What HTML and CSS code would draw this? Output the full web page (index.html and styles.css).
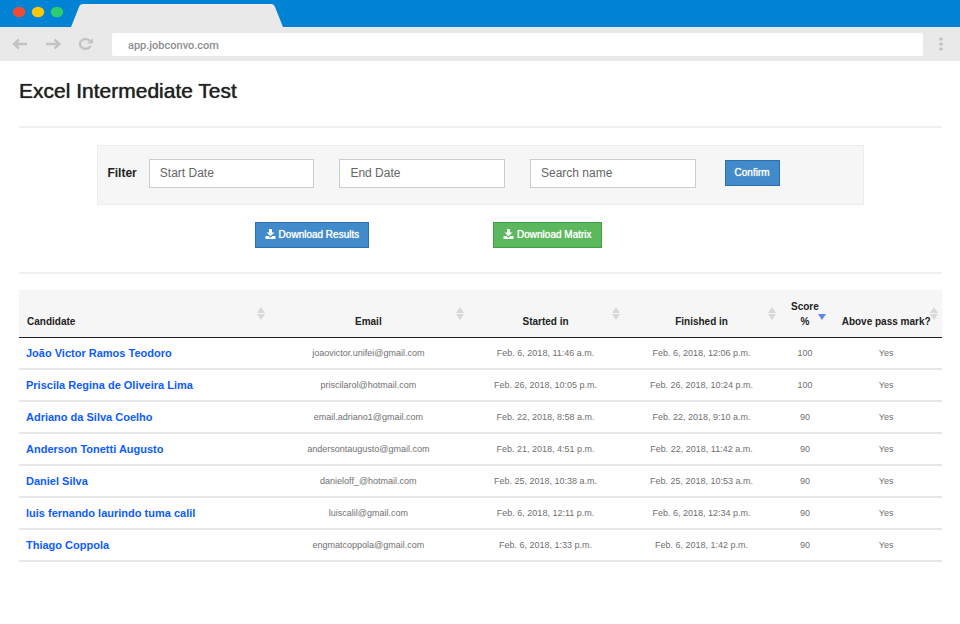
FILE: index.html
```html
<!DOCTYPE html>
<html lang="en">
<head>
    <meta charset="UTF-8">
    <meta name="viewport" content="width=device-width, initial-scale=1.0">
    <title>Excel Intermediate Test</title>
    <link rel="stylesheet" href="styles.css">
</head>
<body>
    <header class="browser">
        <div class="tabs">
            <svg class="lights" width="52" height="12" viewBox="0 0 52 12">
                <ellipse cx="7" cy="6" rx="6.3" ry="5.2" fill="#f24a33"/>
                <ellipse cx="26" cy="6" rx="6.3" ry="5.2" fill="#f7c80a"/>
                <ellipse cx="45" cy="6" rx="6.3" ry="5.2" fill="#2dcc70"/>
            </svg>
            <svg class="tab" width="212" height="23" viewBox="0 0 212 23">
                <path d="M0 23 L8 3 Q9 0 12 0 H200 Q203 0 204 3 L212 23 Z" fill="#e9e9e9"/>
            </svg>
        </div>
        <div class="toolbar">
            <button class="nav" aria-label="Back">
                <svg width="16" height="12" viewBox="0 0 16 12"><path d="M7 1.5 L2 6 L7 10.5 M2 6 H15"/></svg>
            </button>
            <button class="nav" aria-label="Forward">
                <svg width="16" height="12" viewBox="0 0 16 12"><path d="M9.5 1.5 L14.5 6 L9.5 10.5 M14.5 6 H1"/></svg>
            </button>
            <button class="nav" aria-label="Reload">
                <svg width="16" height="12" viewBox="0 0 16 12"><path d="M12.6 8 A5.6 4.8 0 1 1 11.8 2.8"/><path class="solid" d="M15 0.3 V5.6 H8.8 Z"/></svg>
            </button>
            <input class="address" type="text" value="app.jobconvo.com" aria-label="Address">
            <button class="nav menu" aria-label="Menu">
                <svg width="6" height="14" viewBox="0 0 6 14"><ellipse class="solid" cx="3" cy="2" rx="2" ry="1.6"/><ellipse class="solid" cx="3" cy="7" rx="2" ry="1.6"/><ellipse class="solid" cx="3" cy="12" rx="2" ry="1.6"/></svg>
            </button>
        </div>
    </header>

    <main class="page">
        <h1>Excel Intermediate Test</h1>
        <hr>

        <form class="filter">
            <label for="start">Filter</label>
            <input type="text" id="start" placeholder="Start Date">
            <input type="text" id="end" placeholder="End Date" aria-label="End Date">
            <input type="text" id="name" placeholder="Search name" aria-label="Search name">
            <button type="button" class="btn">Confirm</button>
        </form>

        <div class="downloads">
            <button class="btn">
                <svg width="11" height="10" viewBox="0 0 11 10"><path d="M4 0 H7 V3.5 H9.5 L5.5 7.2 L1.5 3.5 H4 Z M0.5 7 H3.4 L5.5 8.8 L7.6 7 H10.5 V10 H0.5 Z"/></svg>
                Download Results
            </button>
            <button class="btn green">
                <svg width="11" height="10" viewBox="0 0 11 10"><path d="M4 0 H7 V3.5 H9.5 L5.5 7.2 L1.5 3.5 H4 Z M0.5 7 H3.4 L5.5 8.8 L7.6 7 H10.5 V10 H0.5 Z"/></svg>
                Download Matrix
            </button>
        </div>
        <hr>

        <table class="results">
            <colgroup>
                <col class="col-candidate">
                <col class="col-email">
                <col class="col-date">
                <col class="col-date">
                <col class="col-score">
                <col class="col-pass">
            </colgroup>
            <thead>
                <tr>
                    <th class="sort">Candidate</th>
                    <th class="sort">Email</th>
                    <th class="sort">Started in</th>
                    <th class="sort">Finished in</th>
                    <th class="sort desc">Score %</th>
                    <th class="sort">Above pass mark?</th>
                </tr>
            </thead>
            <tbody>
                <tr>
                    <td><a href="#">João Victor Ramos Teodoro</a></td>
                    <td>joaovictor.unifei@gmail.com</td>
                    <td>Feb. 6, 2018, 11:46 a.m.</td>
                    <td>Feb. 6, 2018, 12:06 p.m.</td>
                    <td>100</td>
                    <td>Yes</td>
                </tr>
                <tr>
                    <td><a href="#">Priscila Regina de Oliveira Lima</a></td>
                    <td>priscilarol@hotmail.com</td>
                    <td>Feb. 26, 2018, 10:05 p.m.</td>
                    <td>Feb. 26, 2018, 10:24 p.m.</td>
                    <td>100</td>
                    <td>Yes</td>
                </tr>
                <tr>
                    <td><a href="#">Adriano da Silva Coelho</a></td>
                    <td>email.adriano1@gmail.com</td>
                    <td>Feb. 22, 2018, 8:58 a.m.</td>
                    <td>Feb. 22, 2018, 9:10 a.m.</td>
                    <td>90</td>
                    <td>Yes</td>
                </tr>
                <tr>
                    <td><a href="#">Anderson Tonetti Augusto</a></td>
                    <td>andersontaugusto@gmail.com</td>
                    <td>Feb. 21, 2018, 4:51 p.m.</td>
                    <td>Feb. 22, 2018, 11:42 a.m.</td>
                    <td>90</td>
                    <td>Yes</td>
                </tr>
                <tr>
                    <td><a href="#">Daniel Silva</a></td>
                    <td>danieloff_@hotmail.com</td>
                    <td>Feb. 25, 2018, 10:38 a.m.</td>
                    <td>Feb. 25, 2018, 10:53 a.m.</td>
                    <td>90</td>
                    <td>Yes</td>
                </tr>
                <tr>
                    <td><a href="#">luis fernando laurindo tuma calil</a></td>
                    <td>luiscalil@gmail.com</td>
                    <td>Feb. 6, 2018, 12:11 p.m.</td>
                    <td>Feb. 6, 2018, 12:34 p.m.</td>
                    <td>90</td>
                    <td>Yes</td>
                </tr>
                <tr>
                    <td><a href="#">Thiago Coppola</a></td>
                    <td>engmatcoppola@gmail.com</td>
                    <td>Feb. 6, 2018, 1:33 p.m.</td>
                    <td>Feb. 6, 2018, 1:42 p.m.</td>
                    <td>90</td>
                    <td>Yes</td>
                </tr>
            </tbody>
        </table>
    </main>
</body>
</html>
```

FILE: styles.css
```css
* {
    box-sizing: border-box;
}
body {
    margin: 0;
    background-color: #fff;
    color: #222;
    font-family: "Liberation Sans", Arial, sans-serif;
    font-size: 12px;
}
button, input {
    font-family: inherit;
}

/* browser bar */
.tabs {
    display: flex;
    align-items: flex-end;
    gap: 7px;
    height: 27px;
    padding-left: 12px;
    background-color: #0082d5;
}
.lights {
    margin-bottom: 9px;
}
.toolbar {
    display: flex;
    align-items: center;
    gap: 17px;
    height: 34px;
    padding: 0 16px 0 12px;
    background-color: #e9e9e9;
}
.nav {
    display: flex;
    padding: 0;
    border: 0;
    background: none;
}
.nav svg {
    fill: none;
    stroke: #c3c3c3;
    stroke-width: 2.4;
}
.nav .solid {
    fill: #c3c3c3;
    stroke: none;
}
.address {
    flex: 1;
    height: 23px;
    margin: 0 -2px 0 1px;
    padding: 3px 16px 0;
    border: 0;
    border-radius: 2px;
    background-color: #fff;
    color: #8c8c8c;
    font-family: Roboto, "Liberation Sans", sans-serif;
    font-size: 11px;
    font-weight: 500;
}

/* page */
.page {
    padding: 18px 18px 18px 19px;
}
h1 {
    margin: 0 0 23px;
    font-size: 21px;
    font-weight: 400;
    line-height: 24px;
    text-shadow: 0 0 1px #222;
}
hr {
    height: 2px;
    margin: 0;
    border: 0;
    background-color: #f0f0f0;
}
.filter {
    display: flex;
    align-items: center;
    gap: 25px;
    width: 83%;
    height: 60px;
    margin: 17px auto;
    padding: 0 83px 4px 9px;
    border: 1px solid #ececec;
    background-color: #f6f6f6;
}
.filter label {
    margin-right: -13px;
    font-weight: bold;
}
.filter input {
    flex: 1;
    min-width: 0;
    height: 29px;
    padding: 0 10px;
    border: 1px solid #ccc;
    background-color: #fff;
    font-size: 12px;
}
.filter input::placeholder {
    color: #666;
}
.filter .btn {
    margin-left: 4px;
}
.btn {
    height: 26px;
    padding: 0 9px 1px;
    border: 1px solid #2b6fb0;
    background-color: #428bca;
    color: #fff;
    font-size: 10px;
    text-shadow: 0 0 1px #fff;
    white-space: nowrap;
}
.btn svg {
    fill: #fff;
    vertical-align: -1px;
}
.green {
    border-color: #3f9f45;
    background-color: #5cb85c;
}
.downloads {
    display: grid;
    grid-template-columns: 1fr 1fr;
    justify-items: center;
    width: 51%;
    margin: 0 0 24px 19%;
}

/* results */
.results {
    width: 100%;
    margin-top: 16px;
    border-collapse: collapse;
    table-layout: fixed;
    text-align: center;
}
.col-candidate {
    width: 27.1%;
}
.col-email {
    width: 21.5%;
}
.col-date {
    width: 16.9%;
}
.col-score {
    width: 5.5%;
}
.col-pass {
    width: 12.1%;
}
th {
    height: 47px;
    padding: 0 8px 8px;
    border-bottom: 1px solid #222;
    background-color: #f6f6f6;
    font-size: 10px;
    line-height: 15px;
    vertical-align: bottom;
}
th:first-child, td:first-child {
    text-align: left;
}
td {
    height: 32px;
    padding: 0 7px;
    border-bottom: 2px solid #e8e8e8;
    color: #707070;
    font-size: 9px;
    white-space: nowrap;
}
td a {
    color: #0d5cff;
    font-size: 11px;
    font-weight: bold;
    text-decoration: none;
}
.sort {
    position: relative;
}
.sort::before, .sort::after {
    content: "";
    position: absolute;
    right: 4px;
    border: 0 solid transparent;
    border-width: 0 4px;
}
.sort::before {
    top: 17px;
    border-bottom: 6px solid #d8d8d8;
}
.sort::after {
    top: 24px;
    border-top: 6px solid #d8d8d8;
}
.desc::before {
    display: none;
}
.desc::after {
    border-top-color: #6681f0;
}
```
